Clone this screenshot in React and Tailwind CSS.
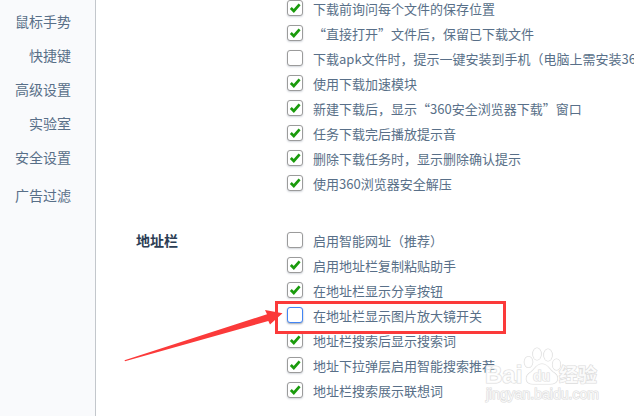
import React from "react";

const sidebarItems = ["鼠标手势", "快捷键", "高级设置", "实验室", "安全设置"];

const downloadOptions = [
  { id: "ask-location", label: "下载前询问每个文件的保存位置", checked: true },
  { id: "keep-opened", label: "“直接打开”文件后，保留已下载文件", checked: true },
  { id: "apk-install", label: "下载apk文件时，提示一键安装到手机（电脑上需安装360", checked: false },
  { id: "accelerate", label: "使用下载加速模块", checked: true },
  { id: "show-window", label: "新建下载后，显示“360安全浏览器下载”窗口", checked: true },
  { id: "play-sound", label: "任务下载完后播放提示音", checked: true },
  { id: "confirm-delete", label: "删除下载任务时，显示删除确认提示", checked: true },
  { id: "safe-unzip", label: "使用360浏览器安全解压", checked: true },
];

const addressOptions = [
  { id: "smart-url", label: "启用智能网址（推荐）", checked: false },
  { id: "paste-helper", label: "启用地址栏复制粘贴助手", checked: true },
  { id: "share-button", label: "在地址栏显示分享按钮", checked: true },
  { id: "magnifier", label: "在地址栏显示图片放大镜开关", checked: false, highlighted: true },
  { id: "show-query", label: "地址栏搜索后显示搜索词", checked: true },
  { id: "smart-suggest", label: "地址下拉弹层启用智能搜索推荐", checked: true },
  { id: "related-words", label: "地址栏搜索展示联想词", checked: true },
];

function Highlight() {
  return (
    <>
      <div className="pointer-events-none absolute -top-0.5 -left-3 z-10 h-[33px] w-[231px] border-3 border-[#fb3a3a]" />
      <svg
        className="pointer-events-none absolute top-1 -left-[163px] z-10 h-[56px] w-[160px]"
        viewBox="0 0 160 56"
        aria-hidden="true"
      >
        <path d="M0.500 53.300 L143 7.300 L141 3 L158.500 6.300 L146 17.500 L144.300 14 L1 54.300 Z" fill="#fb3a3a" />
      </svg>
    </>
  );
}

function Option({ option }) {
  return (
    <li className="relative flex h-[25px] items-start gap-2.5 pt-1">
      <span className="grid size-4 shrink-0">
        <input
          type="checkbox"
          id={option.id}
          defaultChecked={option.checked}
          className={
            option.highlighted
              ? "peer col-start-1 row-start-1 size-4 appearance-none rounded-[3px] border border-[#4285f4] bg-white shadow-[0_1px_2px_#9ca3af]"
              : "peer col-start-1 row-start-1 size-4 appearance-none rounded-[3px] border border-[#9b9b9b] bg-white shadow-[0_1px_2px_#d1d5db]"
          }
        />
        <svg
          className="pointer-events-none invisible col-start-1 row-start-1 size-4 peer-checked:visible"
          viewBox="0 0 16 16"
          fill="none"
          aria-hidden="true"
        >
          <path d="M3.800 8 L6.800 11 L12.600 4.300" stroke="#1a9b0c" strokeWidth="2.700" />
        </svg>
      </span>
      <label htmlFor={option.id} className="text-[13px] leading-[18px] whitespace-nowrap">
        {option.label}
      </label>
      {option.highlighted && <Highlight />}
    </li>
  );
}

function Section({ title, options }) {
  return (
    <section className="flex">
      <h2 className="w-[151px] shrink-0 pt-1 text-sm leading-4 font-bold text-[#2b3d54]">{title}</h2>
      <ul>
        {options.map((option) => (
          <Option key={option.id} option={option} />
        ))}
      </ul>
    </section>
  );
}

function Watermark() {
  return (
    <svg
      className="pointer-events-none absolute right-0 bottom-2 h-[64px] w-[152px]"
      viewBox="0 0 152 64"
      fill="#ffffff"
      fillOpacity="0.8"
      stroke="#dcdcdc"
      strokeWidth="1.200"
      paintOrder="stroke"
    >
      <text x="3" y="39" fontSize="24" fontWeight="700" className="font-['Liberation_Sans']">Bai</text>
      <ellipse cx="46.500" cy="18" rx="4.200" ry="5.500" />
      <ellipse cx="55" cy="10" rx="4.200" ry="6" />
      <ellipse cx="66" cy="11" rx="4.200" ry="6" />
      <ellipse cx="74.500" cy="20.500" rx="4" ry="5.500" />
      <path d="M60 20 C54 20 53 25 49 28 C42 32 43 40 51 40 H68 C77 40 78 32 71 28 C67 25 66 20 60 20 Z" />
      <text x="51" y="37" fontSize="14" fontWeight="700" className="font-['Liberation_Sans']">du</text>
      <text x="77" y="38" fontSize="19" fontWeight="700" className="font-['Noto_Sans_CJK_SC']">经验</text>
      <text x="4" y="55" fontSize="14" className="font-['Liberation_Sans']">jingyan.baidu.com</text>
    </svg>
  );
}

export default function App() {
  return (
    <div className="relative flex min-h-screen overflow-hidden bg-white font-['Noto_Sans_CJK_SC','Noto_Sans',sans-serif] text-[#586f88]" lang="zh-CN">
      <nav className="w-24 shrink-0 border-r border-[#c3c7cc] bg-[#f9fafc] pt-1 pr-6 text-right text-sm leading-[34px]">
        <ul>
          {sidebarItems.map((item) => (
            <li key={item}>
              <a href="#">{item}</a>
            </li>
          ))}
          <li className="pt-1">
            <a href="#">广告过滤</a>
          </li>
        </ul>
      </nav>
      <main className="-mt-1 flex min-w-0 flex-1 flex-col gap-8 pl-10">
        <Section options={downloadOptions} />
        <Section title="地址栏" options={addressOptions} />
      </main>
      <Watermark />
    </div>
  );
}
